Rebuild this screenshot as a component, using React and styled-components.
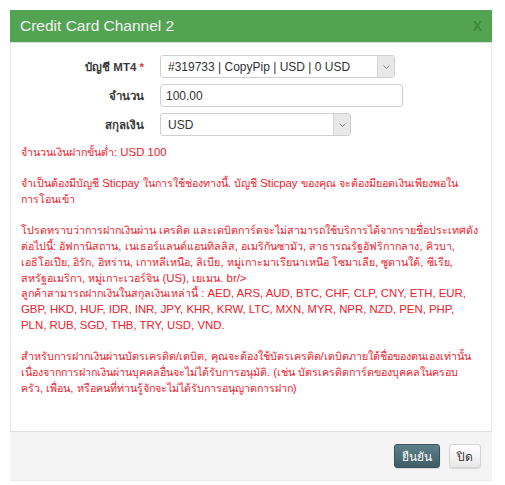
import React from 'react'
import styled, { createGlobalStyle } from 'styled-components'

const GlobalStyle = createGlobalStyle`
  body {
    margin: 0;
    background: #ffffff;
    font-family: "Liberation Sans", "DejaVu Sans", sans-serif;
  }
`

const Page = styled.div`
  padding: 10px 13px 19px 10px;
`

const Modal = styled.div`
  width: 482px;
  background: #fff;
  border: 1px solid #ececec;
  border-top: none;
  box-sizing: border-box;
`

const Header = styled.div`
  height: 32px;
  background: #52a452;
  display: flex;
  align-items: center;
  justify-content: space-between;
  padding: 0 10px;
  margin: 0 -1px;
  border-bottom: 1px solid #dcdcdc;
`

const Title = styled.h3`
  margin: 0;
  font-size: 15.5px;
  font-weight: normal;
  color: #f2f2f2;
`

const Close = styled.span`
  font-size: 14px;
  font-weight: bold;
  color: #3c8a3c;
`

const Body = styled.div`
  padding: 12px 10px 35px;
`

const Form = styled.div`
  display: grid;
  grid-template-columns: 123px auto;
  column-gap: 16px;
  row-gap: 6px;
  align-items: center;
  margin-bottom: 9px;
`

const Label = styled.label`
  text-align: right;
  font-size: 11.5px;
  font-weight: bold;
  color: #3a3a3a;
`

const Req = styled.span`
  color: #e63232;
`

const SelectBox = styled.div`
  width: ${p => p.$w}px;
  height: 23px;
  box-sizing: border-box;
  border: 1px solid #cfcfcf;
  border-radius: 3px;
  display: flex;
  align-items: stretch;
  font-size: 12px;
  color: #333;
  background: #fff;
`

const SelectValue = styled.div`
  flex: 1;
  display: flex;
  align-items: center;
  padding-left: 7px;
`

const Arrow = styled.div`
  width: 16px;
  background: #e8e8e8;
  border-left: 1px solid #d6d6d6;
  display: flex;
  align-items: center;
  justify-content: center;
`

const TextInput = styled.div`
  width: 243px;
  height: 23px;
  box-sizing: border-box;
  border: 1px solid #cfcfcf;
  border-radius: 3px;
  display: flex;
  align-items: center;
  padding-left: 5px;
  font-size: 12px;
  color: #333;
`

const Notes = styled.div`
  color: #f0202a;
  font-size: 11.4px;
  line-height: 15.7px;
`

const Line = styled.div`
  white-space: nowrap;
  min-height: 15.7px;
`

// Thai glyphs of the fallback font run wider than the reference's, so shrink them a bit
const Thai = styled.span`
  font-size: 0.94em;
`

const Footer = styled.div`
  background: #f4f4f4;
  border-top: 1px solid #dedede;
  height: 48px;
  display: flex;
  align-items: center;
  justify-content: flex-end;
  gap: 9px;
  padding: 0 11px 0 0;
  margin: 0 -1px;
`

const Button = styled.button`
  height: 24px;
  padding: 0 7px;
  border-radius: 3px;
  font-family: inherit;
  font-size: 12px;
  cursor: pointer;
  color: ${p => (p.$primary ? '#fff' : '#333')};
  border: 1px solid ${p => (p.$primary ? '#3b525b' : '#d4d4d4')};
  background: ${p =>
    p.$primary
      ? 'linear-gradient(#5f808b, #3f5c66)'
      : 'linear-gradient(#ffffff, #e8e8e8)'};
  box-shadow: 0 1px 1px rgba(0, 0, 0, 0.12);
`

const Chevron = () => (
  <svg width="7" height="4" viewBox="0 0 7 4">
    <polyline points="0.5,0.5 3.5,3.5 6.5,0.5" fill="none" stroke="#8a8a8a" strokeWidth="1" />
  </svg>
)

const Select = ({ width, value }) => (
  <SelectBox $w={width}>
    <SelectValue>{value}</SelectValue>
    <Arrow>
      <Chevron />
    </Arrow>
  </SelectBox>
)

const Mixed = ({ text }) =>
  text.split(/([\u0E00-\u0E7F]+)/).map((part, i) =>
    /[\u0E00-\u0E7F]/.test(part) ? <Thai key={i}>{part}</Thai> : part
  )

const lines = [
  'จำนวนเงินฝากขั้นต่ำ: USD 100',
  '',
  'จำเป็นต้องมีบัญชี Sticpay ในการใช้ช่องทางนี้. บัญชี Sticpay ของคุณ จะต้องมียอดเงินเพียงพอใน',
  'การโอนเข้า',
  '',
  'โปรดทราบว่าการฝากเงินผ่าน เครดิต และเดบิตการ์ดจะไม่สามารถใช้บริการได้จากรายชื่อประเทศดัง',
  'ต่อไปนี้: อัฟกานิสถาน, เนเธอร์แลนด์แอนทิลลิส, อเมริกันซามัว, สาธารณรัฐอัฟริกากลาง, คิวบา,',
  'เอธิโอเปีย, อิรัก, อิหร่าน, เกาหลีเหนือ, ลิเบีย, หมู่เกาะมาเรียนาเหนือ โซมาเลีย, ซูดานใต้, ซีเรีย,',
  'สหรัฐอเมริกา, หมู่เกาะเวอร์จิน (US), เยเมน. br/>',
  'ลูกค้าสามารถฝากเงินในสกุลเงินเหล่านี้ : AED, ARS, AUD, BTC, CHF, CLP, CNY, ETH, EUR,',
  'GBP, HKD, HUF, IDR, INR, JPY, KHR, KRW, LTC, MXN, MYR, NPR, NZD, PEN, PHP,',
  'PLN, RUB, SGD, THB, TRY, USD, VND.',
  '',
  'สำหรับการฝากเงินผ่านบัตรเครดิต/เดบิต, คุณจะต้องใช้บัตรเครดิต/เดบิตภายใต้ชื่อของตนเองเท่านั้น',
  'เนื่องจากการฝากเงินผ่านบุคคลอื่นจะไม่ได้รับการอนุมัติ. (เช่น บัตรเครดิตการ์ดของบุคคลในครอบ',
  'ครัว, เพื่อน, หรือคนที่ท่านรู้จักจะไม่ได้รับการอนุญาตการฝาก)',
]

export default function App() {
  return (
    <Page>
      <GlobalStyle />
      <Modal>
        <Header>
          <Title>Credit Card Channel 2</Title>
          <Close>X</Close>
        </Header>
        <Body>
          <Form>
            <Label>
              บัญชี MT4 <Req>*</Req>
            </Label>
            <Select width={235} value="#319733 | CopyPip | USD | 0 USD" />
            <Label>จำนวน</Label>
            <TextInput>100.00</TextInput>
            <Label>สกุลเงิน</Label>
            <Select width={191} value="USD" />
          </Form>
          <Notes>
            {lines.map((t, i) => (
              <Line key={i}>
                <Mixed text={t} />
              </Line>
            ))}
          </Notes>
        </Body>
        <Footer>
          <Button $primary>ยืนยัน</Button>
          <Button>ปิด</Button>
        </Footer>
      </Modal>
    </Page>
  )
}
